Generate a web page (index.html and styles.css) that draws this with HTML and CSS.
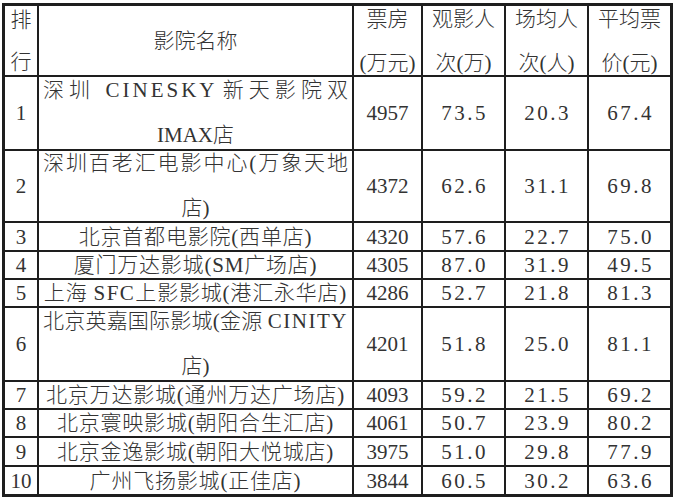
FILE: index.html
```html
<!DOCTYPE html>
<html lang="zh-CN">
<head>
<meta charset="utf-8">
<title>影院票房排行</title>
<link rel="stylesheet" href="styles.css">
</head>
<body>
<div class="tbl">
  <div class="c h rank"><span>排</span><span>行</span></div>
  <div class="c h">影院名称</div>
  <div class="c h two"><span>票房</span><span>(万元)</span></div>
  <div class="c h two"><span>观影人</span><span>次(万)</span></div>
  <div class="c h two"><span>场均人</span><span>次(人)</span></div>
  <div class="c h two last"><span>平均票</span><span>价(元)</span></div>

  <div class="c n">1</div>
  <div class="c name wrap"><span class="l1">深圳 <span class="sp">CINESKY</span>新天影院双</span><span class="l2">IMAX店</span></div>
  <div class="c n">4957</div>
  <div class="c n d">73.5</div>
  <div class="c n d">20.3</div>
  <div class="c n d last">67.4</div>

  <div class="c n">2</div>
  <div class="c name wrap"><span class="l1">深圳百老汇电影中心(万象天地</span><span class="l2">店)</span></div>
  <div class="c n">4372</div>
  <div class="c n d">62.6</div>
  <div class="c n d">31.1</div>
  <div class="c n d last">69.8</div>

  <div class="c n">3</div>
  <div class="c name">北京首都电影院(西单店)</div>
  <div class="c n">4320</div>
  <div class="c n d">57.6</div>
  <div class="c n d">22.7</div>
  <div class="c n d last">75.0</div>

  <div class="c n">4</div>
  <div class="c name">厦门万达影城(SM广场店)</div>
  <div class="c n">4305</div>
  <div class="c n d">87.0</div>
  <div class="c n d">31.9</div>
  <div class="c n d last">49.5</div>

  <div class="c n">5</div>
  <div class="c name">上海<span class="sp2 gap">SFC</span>上影影城(港汇永华店)</div>
  <div class="c n">4286</div>
  <div class="c n d">52.7</div>
  <div class="c n d">21.8</div>
  <div class="c n d last">81.3</div>

  <div class="c n">6</div>
  <div class="c name wrap"><span class="l1">北京英嘉国际影城(金源 <span class="sp2">CINITY</span></span><span class="l2">店)</span></div>
  <div class="c n">4201</div>
  <div class="c n d">51.8</div>
  <div class="c n d">25.0</div>
  <div class="c n d last">81.1</div>

  <div class="c n">7</div>
  <div class="c name">北京万达影城(通州万达广场店)</div>
  <div class="c n">4093</div>
  <div class="c n d">59.2</div>
  <div class="c n d">21.5</div>
  <div class="c n d last">69.2</div>

  <div class="c n">8</div>
  <div class="c name">北京寰映影城(朝阳合生汇店)</div>
  <div class="c n">4061</div>
  <div class="c n d">50.7</div>
  <div class="c n d">23.9</div>
  <div class="c n d last">80.2</div>

  <div class="c n">9</div>
  <div class="c name">北京金逸影城(朝阳大悦城店)</div>
  <div class="c n">3975</div>
  <div class="c n d">51.0</div>
  <div class="c n d">29.8</div>
  <div class="c n d last">77.9</div>

  <div class="c n bot">10</div>
  <div class="c name bot">广州飞扬影城(正佳店)</div>
  <div class="c n bot">3844</div>
  <div class="c n d bot">60.5</div>
  <div class="c n d bot">30.2</div>
  <div class="c n d bot last">63.6</div>
</div>
</body>
</html>
```
FILE: styles.css
```css
* { box-sizing: border-box; }
html, body { margin: 0; padding: 0; background: #fff; }
body {
  font-family: "Liberation Serif", "Noto Sans CJK SC", serif;
  color: #333;
  font-size: 21px;
  font-weight: 300;
}
.tbl {
  margin: 3px 0 0 2px;
  width: 671px;
  display: grid;
  grid-template-columns: 34px 315px 69px 83px 83px 81px;
  grid-template-rows: 71px 74px 72px 29px 28px 28px 74px 28px 28px 29px 27px;
  border: 3px solid #1e1e1e;
}
.c {
  border-right: 2px solid #1e1e1e;
  border-bottom: 2px solid #1e1e1e;
  display: flex;
  align-items: center;
  justify-content: center;
  line-height: 26px;
  white-space: nowrap;
}
.c.last { border-right: none; }
.c.bot { border-bottom: none; }
.h { flex-direction: column; line-height: 44px; }
.h.rank { line-height: 42px; }
.name { letter-spacing: 0.8px; padding: 0 3px; }
.wrap {
  flex-direction: column;
  align-items: stretch;
  line-height: 45px;
  padding: 0 4px 0 4px;
  letter-spacing: 0;
}
.l1 {
  display: block;
  text-align: justify;
  text-align-last: justify;
}
.l2 { display: block; text-align: center; }
.sp { letter-spacing: 3px; }
.sp2 { letter-spacing: 1.5px; }
.gap { margin-left: 6px; }
.d { letter-spacing: 2.5px; padding-left: 2px; }
```
